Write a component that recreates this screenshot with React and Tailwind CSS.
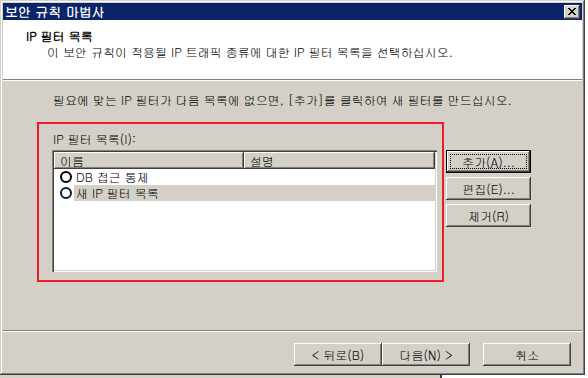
export default function App() {
  const raised =
    "bg-[#d4d0c8] shadow-[inset_-1px_-1px_#404040,inset_1px_1px_#ffffff,inset_-2px_-2px_#808080,inset_2px_2px_#d4d0c8]";
  const btn =
    "flex items-center justify-center text-[12px] leading-[14px] text-black " + raised;
  return (
    <div className="w-[588px] h-[378px] bg-white overflow-hidden flex flex-col font-['Gulim','Noto_Sans_CJK_KR',sans-serif] text-black">
      <div className="w-[585px] h-[375px] shrink-0 bg-[#d4d0c8] shadow-[inset_-1px_-1px_#404040,inset_1px_1px_#d4d0c8,inset_-2px_-2px_#808080,inset_2px_2px_#ffffff] p-[3px] flex flex-col">
        {/* Title bar */}
        <div className="h-[17px] bg-[#0a246a] flex items-center justify-between">
          <span className="pl-[2px] text-white font-bold text-[13px] leading-[15px]">
            보안 규칙 마법사
          </span>
          <div
            className={
              "w-[16px] h-[14px] mr-[2px] flex items-center justify-center " +
              raised
            }
          >
            <svg width="8" height="7" viewBox="0 0 8 7">
              <path
                d="M0 0h2v1h1v1h2v-1h1v-1h2v1h-1v1h-1v1h-1v1h1v1h1v1h1v1h-2v-1h-1v-1h-2v1h-1v1h-2v-1h1v-1h1v-1h1v-1h-1v-1h-1v-1h-1z"
                fill="#000"
              />
            </svg>
          </div>
        </div>
        {/* Header */}
        <div className="h-[59px] bg-white flex flex-col pl-[23px] pt-[9px]">
          <div className="font-bold text-[12px] leading-[14px]">IP 필터 목록</div>
          <div className="pl-[21px] mt-[2px] text-[12px] leading-[14px]">
            이 보안 규칙이 적용될 IP 트래픽 종류에 대한 IP 필터 목록을 선택하십시오.
          </div>
        </div>
        <div className="h-[1px] bg-[#808080]" />
        <div className="h-[1px] bg-white" />
        {/* Body */}
        <div className="h-[249px] flex flex-col">
          <div className="mt-[12px] pl-[50px] text-[12px] leading-[14px]">
            필요에 맞는 IP 필터가 다음 목록에 없으면, [추가]를 클릭하여 새 필터를 만드십시오.
          </div>
          <div className="mt-[15px] flex">
            <div className="ml-[34px] w-[407px] h-[160px] border-2 border-[#ee1c24] flex flex-col pl-[13px] pt-[8px]">
              <div className="pl-[1px] text-[12px] leading-[14px]">IP 필터 목록(I):</div>
              <div className="mt-[4px] w-[385px] h-[122px] bg-white p-[2px] shadow-[inset_1px_1px_#808080,inset_2px_2px_#404040,inset_-1px_-1px_#ffffff,inset_-2px_-2px_#d4d0c8] flex flex-col">
                <div className="h-[17px] flex">
                  <div
                    className={
                      "w-[190px] flex items-center pl-[6px] text-[12px] leading-[14px] " +
                      raised
                    }
                  >
                    이름
                  </div>
                  <div
                    className={
                      "w-[191px] flex items-center pl-[6px] text-[12px] leading-[14px] " +
                      raised
                    }
                  >
                    설명
                  </div>
                </div>
                <div className="h-[16px] flex items-center pl-[6px]">
                  <div className="w-[12px] h-[12px] rounded-full border-2 border-black" />
                  <div className="ml-[2px] h-[16px] flex items-center px-[2px] text-[12px] leading-[14px]">
                    DB 접근 통제
                  </div>
                </div>
                <div className="h-[16px] flex items-center pl-[6px]">
                  <div className="w-[12px] h-[12px] rounded-full border-2 border-[#0a1a40]" />
                  <div className="ml-[2px] h-[16px] flex-1 flex items-center px-[2px] bg-[#d4d0c8] text-[12px] leading-[14px]">
                    새 IP 필터 목록
                  </div>
                </div>
              </div>
            </div>
            <div className="ml-[2px] mt-[28px] flex flex-col gap-[4px]">
              <div className="w-[85px] h-[23px] border border-black">
                <div className={"w-full h-full p-[3px] " + btn}>
                  <div className="w-full h-full border border-dotted border-black flex items-center justify-center">
                    추가(A)...
                  </div>
                </div>
              </div>
              <div className={"w-[85px] h-[23px] " + btn}>편집(E)...</div>
              <div className={"w-[85px] h-[23px] " + btn}>제거(R)</div>
            </div>
          </div>
        </div>
        <div className="h-[1px] bg-[#808080]" />
        <div className="h-[1px] bg-white" />
        {/* Footer */}
        <div className="flex-1 flex justify-end pt-[11px] pr-[11px]">
          <div className={"w-[88px] h-[23px] " + btn}>&lt; 뒤로(B)</div>
          <div className={"w-[88px] h-[23px] " + btn}>다음(N) &gt;</div>
          <div className={"w-[88px] h-[23px] ml-[13px] " + btn}>취소</div>
        </div>
      </div>
      <div className="flex-1 flex">
        <div className="w-[442px] bg-[#d4d0c8] border-r-[2px] border-[#404040]" />
        <div className="flex-1 bg-white" />
      </div>
    </div>
  );
}
